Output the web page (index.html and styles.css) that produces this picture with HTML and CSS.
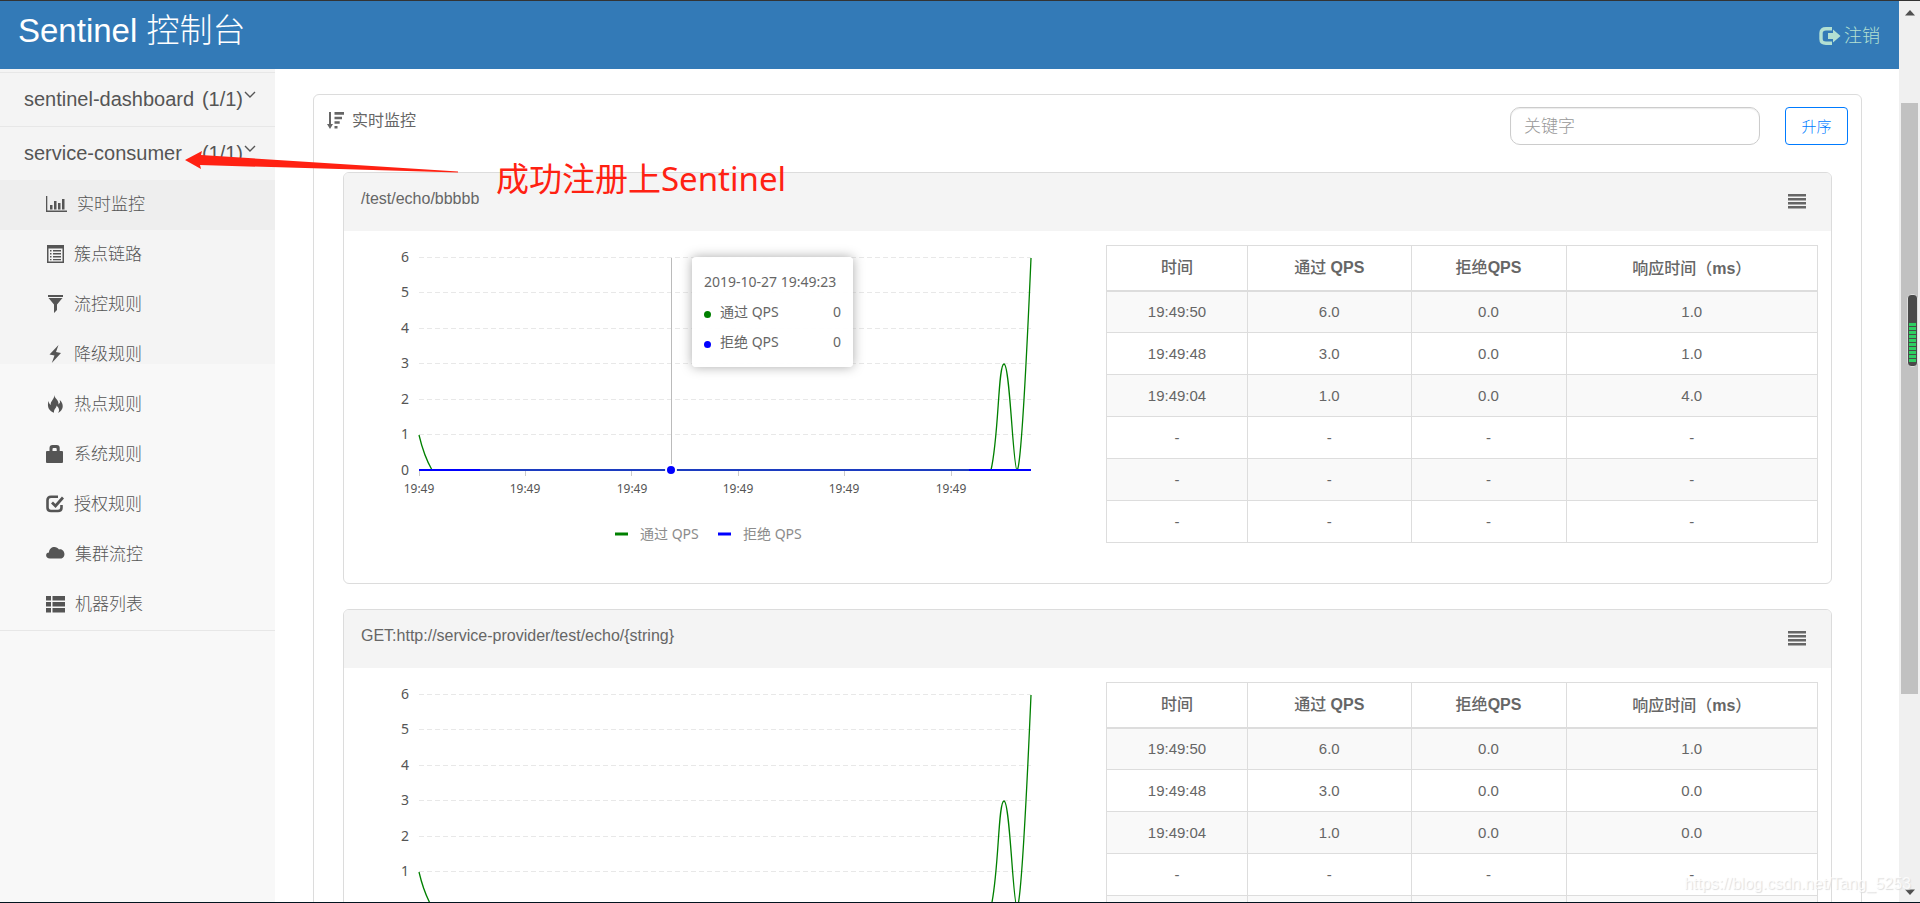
FILE: index.html
```html
<!DOCTYPE html>
<html lang="zh-CN">
<head>
<meta charset="utf-8">
<title>Sentinel 控制台</title>
<link rel="stylesheet" href="styles.css">
</head>
<body>
<div class="app">
  <div class="page">
    <header class="topbar">
      <h1 class="brand">Sentinel 控制台</h1>
      <a class="logout" href="#logout">
        <svg width="22" height="18" viewBox="0 0 22 18" aria-hidden="true"><path d="M13 1.8H7Q2 1.8 2 6v6q0 4.200 5 4.200h6" fill="none" stroke="currentColor" stroke-width="3.400"/><path d="M9 6h5V2.500L21.500 9 14 15.500V12H9z" fill="currentColor"/></svg>
        <span>注销</span>
      </a>
    </header>
    <div class="layout">
      <nav class="sidebar">
        <ul class="apps">
          <li><a class="app-row" href="#dashboard"><span class="app-name">sentinel-dashboard</span><span class="app-count">(1/1)</span><svg class="chevron" width="12" height="8" viewBox="0 0 12 8" aria-hidden="true"><path d="M1 1l5 5 5-5"/></svg></a></li>
          <li><a class="app-row" href="#consumer"><span class="app-name">service-consumer</span><span class="app-count">(1/1)</span><svg class="chevron" width="12" height="8" viewBox="0 0 12 8" aria-hidden="true"><path d="M1 1l5 5 5-5"/></svg></a>
            <ul class="menu">
              <li><a class="active" href="#metric"><svg width="21" height="18" viewBox="0 0 21 18"><path d="M0 1h1.300v14.500H21V17H0zM4 10h2.500v4.500H4zM8 6h2.500v8.500H8zM12 8h2.500v6.500H12zM16 4h2.500v10.500H16z"/></svg>实时监控</a></li>
              <li><a href="#identity"><svg width="18" height="18" viewBox="0 0 18 18"><path fill-rule="evenodd" d="M1 0h17v18H1zM2.500 3.500v13h14v-13zM4 5h1.500v1.500H4zM7 5h8v1.500H7zM4 8h1.500v1.500H4zM7 8h8v1.500H7zM4 11h1.500v1.500H4zM7 11h8v1.500H7zM4 14h1.500v1.200H4zM7 14h8v1.200H7z"/></svg>簇点链路</a></li>
              <li><a href="#flow"><svg width="18" height="18" viewBox="0 0 18 18"><path d="M2 0h15v2H2zM2.500 3h14L11 9.500V15l-3 3V9.500z"/></svg>流控规则</a></li>
              <li><a href="#degrade"><svg width="18" height="18" viewBox="0 0 18 18"><path d="M12.500 0L3.500 9.500l5 1L5.800 18 15 8l-5-1z"/></svg>降级规则</a></li>
              <li><a href="#param"><svg width="18" height="18" viewBox="0 0 18 18"><path d="M8 0c1 4 5 5 4.500 9.500L14 7.500 13.800 5C18 9 18 15 12 18c2-3 1-5-1.500-7.500C11 13 7.500 13.500 8 17.700 3 16 .800 12 2.500 6c.5 2 1 3 2.300 4C4 6 9 4 8 0z"/></svg>热点规则</a></li>
              <li><a href="#system"><svg width="18" height="18" viewBox="0 0 18 18"><path fill-rule="evenodd" d="M3.500 6V3q0-3 3-3h4.200q3 0 3 3v3H16q1 0 1 1v10q0 1-1 1H1q-1 0-1-1V7q0-1 1-1zM6.500 6h4.200V4q0-1-1-1H7.500q-1 0-1 1z"/></svg>系统规则</a></li>
              <li><a href="#authority"><svg width="18" height="18" viewBox="0 0 18 18"><path d="M12 1.800H5Q1.500 1.800 1.500 5v7.500q0 3.500 3.500 3.500h7q3.500 0 3.500-3.500V10" fill="none" stroke="currentColor" stroke-width="2.600"/><path d="M6 7.500L9.500 11 17 2.500" fill="none" stroke="currentColor" stroke-width="2.800"/></svg>授权规则</a></li>
              <li><a href="#cluster"><svg width="19" height="18" viewBox="0 0 19 18"><path d="M4 13.500C-1 13.500-1 7.500 3 7.500c0-6 7.500-7.500 10-3 5-1.500 8 7 2.500 9z"/></svg>集群流控</a></li>
              <li><a href="#machine"><svg width="19" height="18" viewBox="0 0 19 18"><path d="M0 1h5v4.500H0zM6.500 1H19v4.500H6.500zM0 7h5v4.500H0zM6.500 7H19v4.500H6.500zM0 13h5v4.500H0zM6.500 13H19v4.500H6.500z"/></svg>机器列表</a></li>
            </ul>
          </li>
        </ul>
      </nav>
      <main class="content">
        <section class="panel">
          <div class="panel-head">
            <h2 class="panel-title"><svg width="17" height="17" viewBox="0 0 17 17" aria-hidden="true"><path d="M2 0h2v12h2L3 17l-3-5h2zM7.500 0H17v2.800H7.500zM7.500 4.700H15v2.500H7.500zM7.500 9.300h5.200v2.500H7.500zM7.500 14h3v2.500h-3z"/></svg>实时监控</h2>
            <input class="search" type="text" placeholder="关键字" aria-label="关键字">
            <button class="sort" type="button">升序</button>
          </div>

          <article class="card">
            <div class="card-head">
              <span>/test/echo/bbbbb</span>
              <button class="list-btn" type="button" aria-label="列表"><svg width="18" height="15" viewBox="0 0 18 15"><path d="M0 0h18v2.500H0zM0 4h18v2.500H0zM0 8h18v2.500H0zM0 12h18v2.500H0z"/></svg></button>
            </div>
            <div class="card-body">
              <div class="chart">
                <svg viewBox="0 0 748 352">
                  <path class="grid" d="M75 26.500H687M75 61.500H687M75 97.500H687M75 132.500H687M75 168.500H687M75 203.500H687"/>
                  <path class="tick" d="M75.500 239v6M181.500 239v6M287.500 239v6M394.500 239v6M500.500 239v6M607.500 239v6"/>
                  <g class="ylab"><text x="65" y="31">6</text><text x="65" y="66">5</text><text x="65" y="102">4</text><text x="65" y="137">3</text><text x="65" y="173">2</text><text x="65" y="208">1</text><text x="65" y="244">0</text></g>
                  <g class="xlab"><text x="75" y="262">19:49</text><text x="181" y="262">19:49</text><text x="288" y="262">19:49</text><text x="394" y="262">19:49</text><text x="500" y="262">19:49</text><text x="607" y="262">19:49</text></g>
                  <path class="cross" d="M327.500 27V239"/>
                  <path class="pass" d="M75 204C79 221 84 232 88 239M647 239C655 205 654 133 660 133S669 238 673 239S683 120 687 27"/>
                  <path class="block" d="M75 239H687"/><path class="both" d="M136 239H625"/>
                  <circle class="dot" cx="327" cy="239" r="5"/>
                  <path class="pass key" d="M271 303h13"/><text class="legend" x="296" y="308">通过 QPS</text>
                  <path class="block key" d="M374 303h13"/><text class="legend" x="399" y="308">拒绝 QPS</text>
                </svg>
                <div class="tooltip">
                  <div class="tip-title">2019-10-27 19:49:23</div>
                  <div class="tip-row"><i class="green"></i><span>通过 QPS</span><b>0</b></div>
                  <div class="tip-row"><i class="blue"></i><span>拒绝 QPS</span><b>0</b></div>
                </div>
              </div>
              <div class="data">
                <table>
                  <colgroup><col class="c1"><col class="c2"><col class="c3"><col class="c4"></colgroup>
                  <thead><tr><th>时间</th><th>通过 <b>QPS</b></th><th>拒绝<b>QPS</b></th><th>响应时间<span class="paren">（</span><b>ms</b><span class="paren">）</span></th></tr></thead>
                  <tbody>
                    <tr><td>19:49:50</td><td>6.0</td><td>0.0</td><td>1.0</td></tr>
                    <tr><td>19:49:48</td><td>3.0</td><td>0.0</td><td>1.0</td></tr>
                    <tr><td>19:49:04</td><td>1.0</td><td>0.0</td><td>4.0</td></tr>
                    <tr><td>-</td><td>-</td><td>-</td><td>-</td></tr>
                    <tr><td>-</td><td>-</td><td>-</td><td>-</td></tr>
                    <tr><td>-</td><td>-</td><td>-</td><td>-</td></tr>
                  </tbody>
                </table>
              </div>
            </div>
          </article>

          <article class="card">
            <div class="card-head">
              <span>GET:http://service-provider/test/echo/{string}</span>
              <button class="list-btn" type="button" aria-label="列表"><svg width="18" height="15" viewBox="0 0 18 15"><path d="M0 0h18v2.500H0zM0 4h18v2.500H0zM0 8h18v2.500H0zM0 12h18v2.500H0z"/></svg></button>
            </div>
            <div class="card-body">
              <div class="chart">
                <svg viewBox="0 0 748 352">
                  <path class="grid" d="M75 26.500H687M75 61.500H687M75 97.500H687M75 132.500H687M75 168.500H687M75 203.500H687"/>
                  <path class="tick" d="M75.500 239v6M181.500 239v6M287.500 239v6M394.500 239v6M500.500 239v6M607.500 239v6"/>
                  <g class="ylab"><text x="65" y="31">6</text><text x="65" y="66">5</text><text x="65" y="102">4</text><text x="65" y="137">3</text><text x="65" y="173">2</text><text x="65" y="208">1</text><text x="65" y="244">0</text></g>
                  <path class="pass" d="M75 204C79 221 84 232 88 239M647 239C655 205 654 133 660 133S669 238 673 239S683 120 687 27"/>
                  <path class="block" d="M75 239H687"/>
                </svg>
              </div>
              <div class="data">
                <table>
                  <colgroup><col class="c1"><col class="c2"><col class="c3"><col class="c4"></colgroup>
                  <thead><tr><th>时间</th><th>通过 <b>QPS</b></th><th>拒绝<b>QPS</b></th><th>响应时间<span class="paren">（</span><b>ms</b><span class="paren">）</span></th></tr></thead>
                  <tbody>
                    <tr><td>19:49:50</td><td>6.0</td><td>0.0</td><td>1.0</td></tr>
                    <tr><td>19:49:48</td><td>3.0</td><td>0.0</td><td>0.0</td></tr>
                    <tr><td>19:49:04</td><td>1.0</td><td>0.0</td><td>0.0</td></tr>
                    <tr><td>-</td><td>-</td><td>-</td><td>-</td></tr>
                    <tr><td>-</td><td>-</td><td>-</td><td>-</td></tr>
                    <tr><td>-</td><td>-</td><td>-</td><td>-</td></tr>
                  </tbody>
                </table>
              </div>
            </div>
          </article>
        </section>
      </main>
    </div>
  </div>

  <div class="scroll" aria-hidden="true">
    <svg width="10" height="6" viewBox="0 0 10 6"><path d="M0 5.500L5 0l5 5.500z"/></svg>
    <div class="track"><div class="thumb"></div></div>
    <svg width="10" height="6" viewBox="0 0 10 6"><path d="M0 .500h10L5 6z"/></svg>
    <div class="meter"><div class="level"></div></div>
  </div>

  <svg class="arrow" width="275" height="24" viewBox="0 0 275 24" aria-hidden="true"><path d="M0 10L17 1l-1 4 257 16.500v1L15 15l1 4z"/></svg>
  <div class="note">成功注册上Sentinel</div>
  <div class="watermark">https://blog.csdn.net/Tang_5253</div>
</div>
</body>
</html>
```

FILE: styles.css
```css
* { box-sizing: border-box; }
body {
  margin: 0;
  color: #666;
  font: 16px/24px "Liberation Sans", "Noto Sans CJK SC", sans-serif;
}
ul { list-style: none; margin: 0; padding: 0; }
a { color: inherit; text-decoration: none; }
svg { fill: currentColor; flex: none; }

.app {
  position: relative;
  display: flex;
  height: 100vh;
  overflow: hidden;
  border-top: 1px solid #333;
  border-bottom: 1px solid #02141f;
}
.page { flex: 1; min-width: 0; display: flex; flex-direction: column; }

/* top bar */
.topbar {
  flex: none;
  display: flex;
  align-items: center;
  justify-content: space-between;
  height: 68px;
  padding: 0 19px 0 18px;
  background: #337ab7;
  color: #fff;
}
.brand { margin: 0 0 8px; font-size: 33px; line-height: 40px; font-weight: 300; }
.logout { display: flex; align-items: center; gap: 3px; padding-top: 2px; font-size: 18px; font-weight: 300; color: #b3e0d2; }

.layout { flex: 1; min-height: 0; display: flex; }

/* side menu */
.sidebar {
  flex: 0 0 275px;
  padding-top: 3px;
  background: linear-gradient(#f4f4f4 295px, #f8f8f8 295px);
  color: #555;
}
.apps { border-bottom: 1px solid #e7e7e7; }
.apps > li { border-top: 1px solid #e7e7e7; }
.app-row { display: flex; height: 53px; padding: 0 19px 1px 24px; align-items: center; font-size: 20px; }
.app-name { flex: 1; }
.chevron { margin: 0 0 8px 1px; fill: none; stroke: currentColor; stroke-width: 1.4; }
.menu a { display: flex; align-items: center; gap: 10px; height: 50px; padding-left: 46px; font-size: 17px; font-weight: 300; }
.menu svg { margin-bottom: 3px; }
.menu .active { background: #eee; }

/* content */
.content { flex: 1; min-width: 0; padding: 25px 37px 0 38px; }
.panel { padding: 0 29px 25px; border: 1px solid #dcdcdc; border-radius: 6px; }
.panel-head { display: flex; align-items: center; gap: 25px; height: 77px; margin: 0 -16px; padding-bottom: 16px; }
.panel-title { flex: 1; display: flex; gap: 8px; align-items: center; margin: 0 0 10px; font-size: 16px; font-weight: 400; }
.search {
  width: 250px;
  height: 38px;
  padding: 2px 13px 0;
  border: 1px solid #ccc;
  border-radius: 10px;
  box-shadow: inset 0 1px 1px rgba(0, 0, 0, .08);
  font: 300 17px "Liberation Sans", "Noto Sans CJK SC", sans-serif;
}
.search::placeholder { color: #999; }
.sort {
  width: 63px;
  height: 38px;
  padding: 0;
  border: 1px solid #007bff;
  border-radius: 4px;
  background: #fff;
  color: #007bff;
  font: 300 15px "Liberation Sans", "Noto Sans CJK SC", sans-serif;
}

.card { border: 1px solid #dcdcdc; border-radius: 6px; }
.card + .card { margin-top: 25px; }
.card-head {
  display: flex;
  align-items: center;
  justify-content: space-between;
  height: 58px;
  padding: 0 25px 6px 17px;
  border-radius: 5px 5px 0 0;
  background: #f4f4f4;
}
.list-btn { display: flex; margin-top: 4px; padding: 0; border: 0; background: none; color: #666; }
.card-body { display: flex; gap: 14px; padding-right: 13px; }
.chart { position: relative; flex: 748 1 0; min-width: 0; }
.chart > svg { display: block; width: 100%; font-family: "Noto Sans", "Noto Sans CJK SC", sans-serif; }
.grid { fill: none; stroke: #e8e8e8; stroke-dasharray: 5 3; }
.tick { fill: none; stroke: #ccc; }
.cross { stroke: #bbb; }
.pass { fill: none; stroke: green; stroke-width: 1.3; }
.block { fill: none; stroke: blue; stroke-width: 2; }
.both { fill: none; stroke: #1c3cc0; stroke-width: 2; }
.key { stroke-width: 3; }
.dot { fill: blue; stroke: #fff; stroke-width: 2; }
.ylab { font-size: 14px; text-anchor: end; fill: #555; }
.xlab { font-size: 12px; text-anchor: middle; fill: #555; }
.legend { font-size: 14px; fill: #8c8c8c; }

.tooltip {
  position: absolute;
  left: 348px;
  top: 26px;
  width: 161px;
  padding: 10px 12px;
  border-radius: 4px;
  background: rgba(255, 255, 255, .95);
  box-shadow: 0 0 12px #aaa;
  font: 14px/30px "Noto Sans", "Noto Sans CJK SC", sans-serif;
  color: #666;
  white-space: nowrap;
}
.tip-row { display: flex; align-items: center; }
.tip-row i { width: 7px; height: 7px; margin: 4px 9px 0 0; border-radius: 50%; }
.tip-row span { flex: 1; }
.tip-row b { font-weight: 400; }
.green { background: green; }
.blue { background: blue; }

/* table */
.data { flex: 712 1 0; min-width: 0; padding-top: 14px; }
table { width: 100%; border-collapse: collapse; table-layout: fixed; text-align: center; }
.c1 { width: 141px; }
.c2 { width: 23%; }
.c3 { width: 155px; }
.c4 { width: auto; }
th, td { padding: 0; border: 1px solid #ddd; }
th { height: 45px; border-bottom-width: 2px; font-weight: 500; }
.paren { font-family: "Noto Sans CJK TC", sans-serif; }
td { height: 42px; font-size: 15px; }
tbody tr:nth-child(odd) { background: #f9f9f9; }

/* scrollbar */
.scroll {
  position: relative;
  flex: 0 0 21px;
  display: flex;
  flex-direction: column;
  align-items: center;
  padding: 9px 0 7px;
  background: #f0f0f0;
  color: #505050;
}
.track { flex: 1; width: 17px; padding: 87px 0 195px; display: flex; }
.thumb { flex: 1; background: #c1c1c1; }
.meter { position: absolute; right: 2px; top: 293px; width: 11px; height: 73px; padding: 28px 1px 3px; border: 1px solid #ddd; border-radius: 4px; background: #4a4a4a; }
.level { height: 100%; background: repeating-linear-gradient(#2fcf62 0 3px, #4a4a4a 3px 4px); }

/* annotations laid over the page */
.arrow { position: absolute; left: 185px; top: 149px; color: #ff2112; }
.note { position: absolute; left: 496px; top: 154px; font: 33px/48px "Noto Sans", "Noto Sans CJK SC", sans-serif; color: #ff2112; white-space: nowrap; }
.watermark { position: absolute; right: 9px; bottom: 6px; color: rgba(255, 255, 255, .8); text-shadow: 1px 1px 1px #ddd; }
```
